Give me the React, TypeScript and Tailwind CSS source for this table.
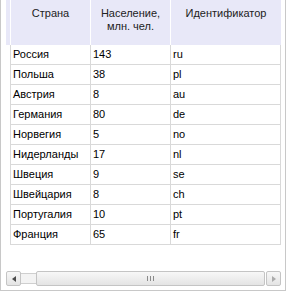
const rows = [
  { country: 'Россия', population: '143', code: 'ru' },
  { country: 'Польша', population: '38', code: 'pl' },
  { country: 'Австрия', population: '8', code: 'au' },
  { country: 'Германия', population: '80', code: 'de' },
  { country: 'Норвегия', population: '5', code: 'no' },
  { country: 'Нидерланды', population: '17', code: 'nl' },
  { country: 'Швеция', population: '9', code: 'se' },
  { country: 'Швейцария', population: '8', code: 'ch' },
  { country: 'Португалия', population: '10', code: 'pt' },
  { country: 'Франция', population: '65', code: 'fr' },
];

const ScrollButton = ({ dir }: { dir: 'left' | 'right' }) => (
  <div className="flex h-[15px] w-[15px] items-center justify-center rounded-[2px] border border-[#c4c4c4] bg-gradient-to-b from-[#f7f7f7] to-[#e4e4e4]">
    <svg width="4" height="6" viewBox="0 0 4 6">
      {dir === 'left' ? (
        <path d="M4 0 L0 3 L4 6 Z" fill="#4a4a4a" />
      ) : (
        <path d="M0 0 L4 3 L0 6 Z" fill="#ababab" />
      )}
    </svg>
  </div>
);

export default function App() {
  return (
    <div className="h-[292px] w-[287px] bg-white font-['Liberation_Sans',Arial,sans-serif] text-[11px] text-black">
      <div className="flex h-[291px] w-[286px] flex-col border-x border-b border-[#c8c8c8] pb-[4px] pl-[5px] pr-[4px]">
        {/* header */}
        <div className="flex h-[45px]">
          <div className="w-[4px] bg-[#e8e8f8]" />
          <div className="w-[80px] border-l border-white bg-[#e8e8f8] pt-[7px] text-center leading-[13px] text-[#222]">
            Страна
          </div>
          <div className="w-[80px] border-l border-white bg-[#e8e8f8] pt-[7px] text-center leading-[13px] text-[#222]">
            Население,
            <br />
            млн. чел.
          </div>
          <div className="w-[111px] border-l border-white bg-[#e8e8f8] pt-[7px] text-center leading-[13px] text-[#222]">
            Идентификатор
          </div>
        </div>

        {/* body */}
        <div className="ml-[4px] w-[271px]">
          {rows.map((r) => (
            <div
              key={r.code}
              className="flex h-[20px] border-x border-b border-[#d9d9d9] leading-[19px]"
            >
              <div className="w-[80px] border-r border-[#d9d9d9] pl-[2px]">{r.country}</div>
              <div className="w-[80px] border-r border-[#d9d9d9] pl-[2px]">{r.population}</div>
              <div className="flex-1 pl-[2px]">{r.code}</div>
            </div>
          ))}
        </div>

        {/* horizontal scrollbar */}
        <div className="mt-auto flex h-[15px] items-center">
          <ScrollButton dir="left" />
          <div className="h-[11px] w-[15px] border-y border-[#cfcfcf] bg-[#f3f3f3]" />
          <div className="flex h-[15px] flex-1 items-center justify-center gap-[2px] rounded-[2px] border border-[#c4c4c4] bg-gradient-to-b from-[#f7f7f7] to-[#e4e4e4]">
            <div className="h-[5px] w-px bg-[#8a8a8a]" />
            <div className="h-[5px] w-px bg-[#8a8a8a]" />
            <div className="h-[5px] w-px bg-[#8a8a8a]" />
          </div>
          <div className="w-px" />
          <ScrollButton dir="right" />
        </div>
      </div>
    </div>
  );
}
